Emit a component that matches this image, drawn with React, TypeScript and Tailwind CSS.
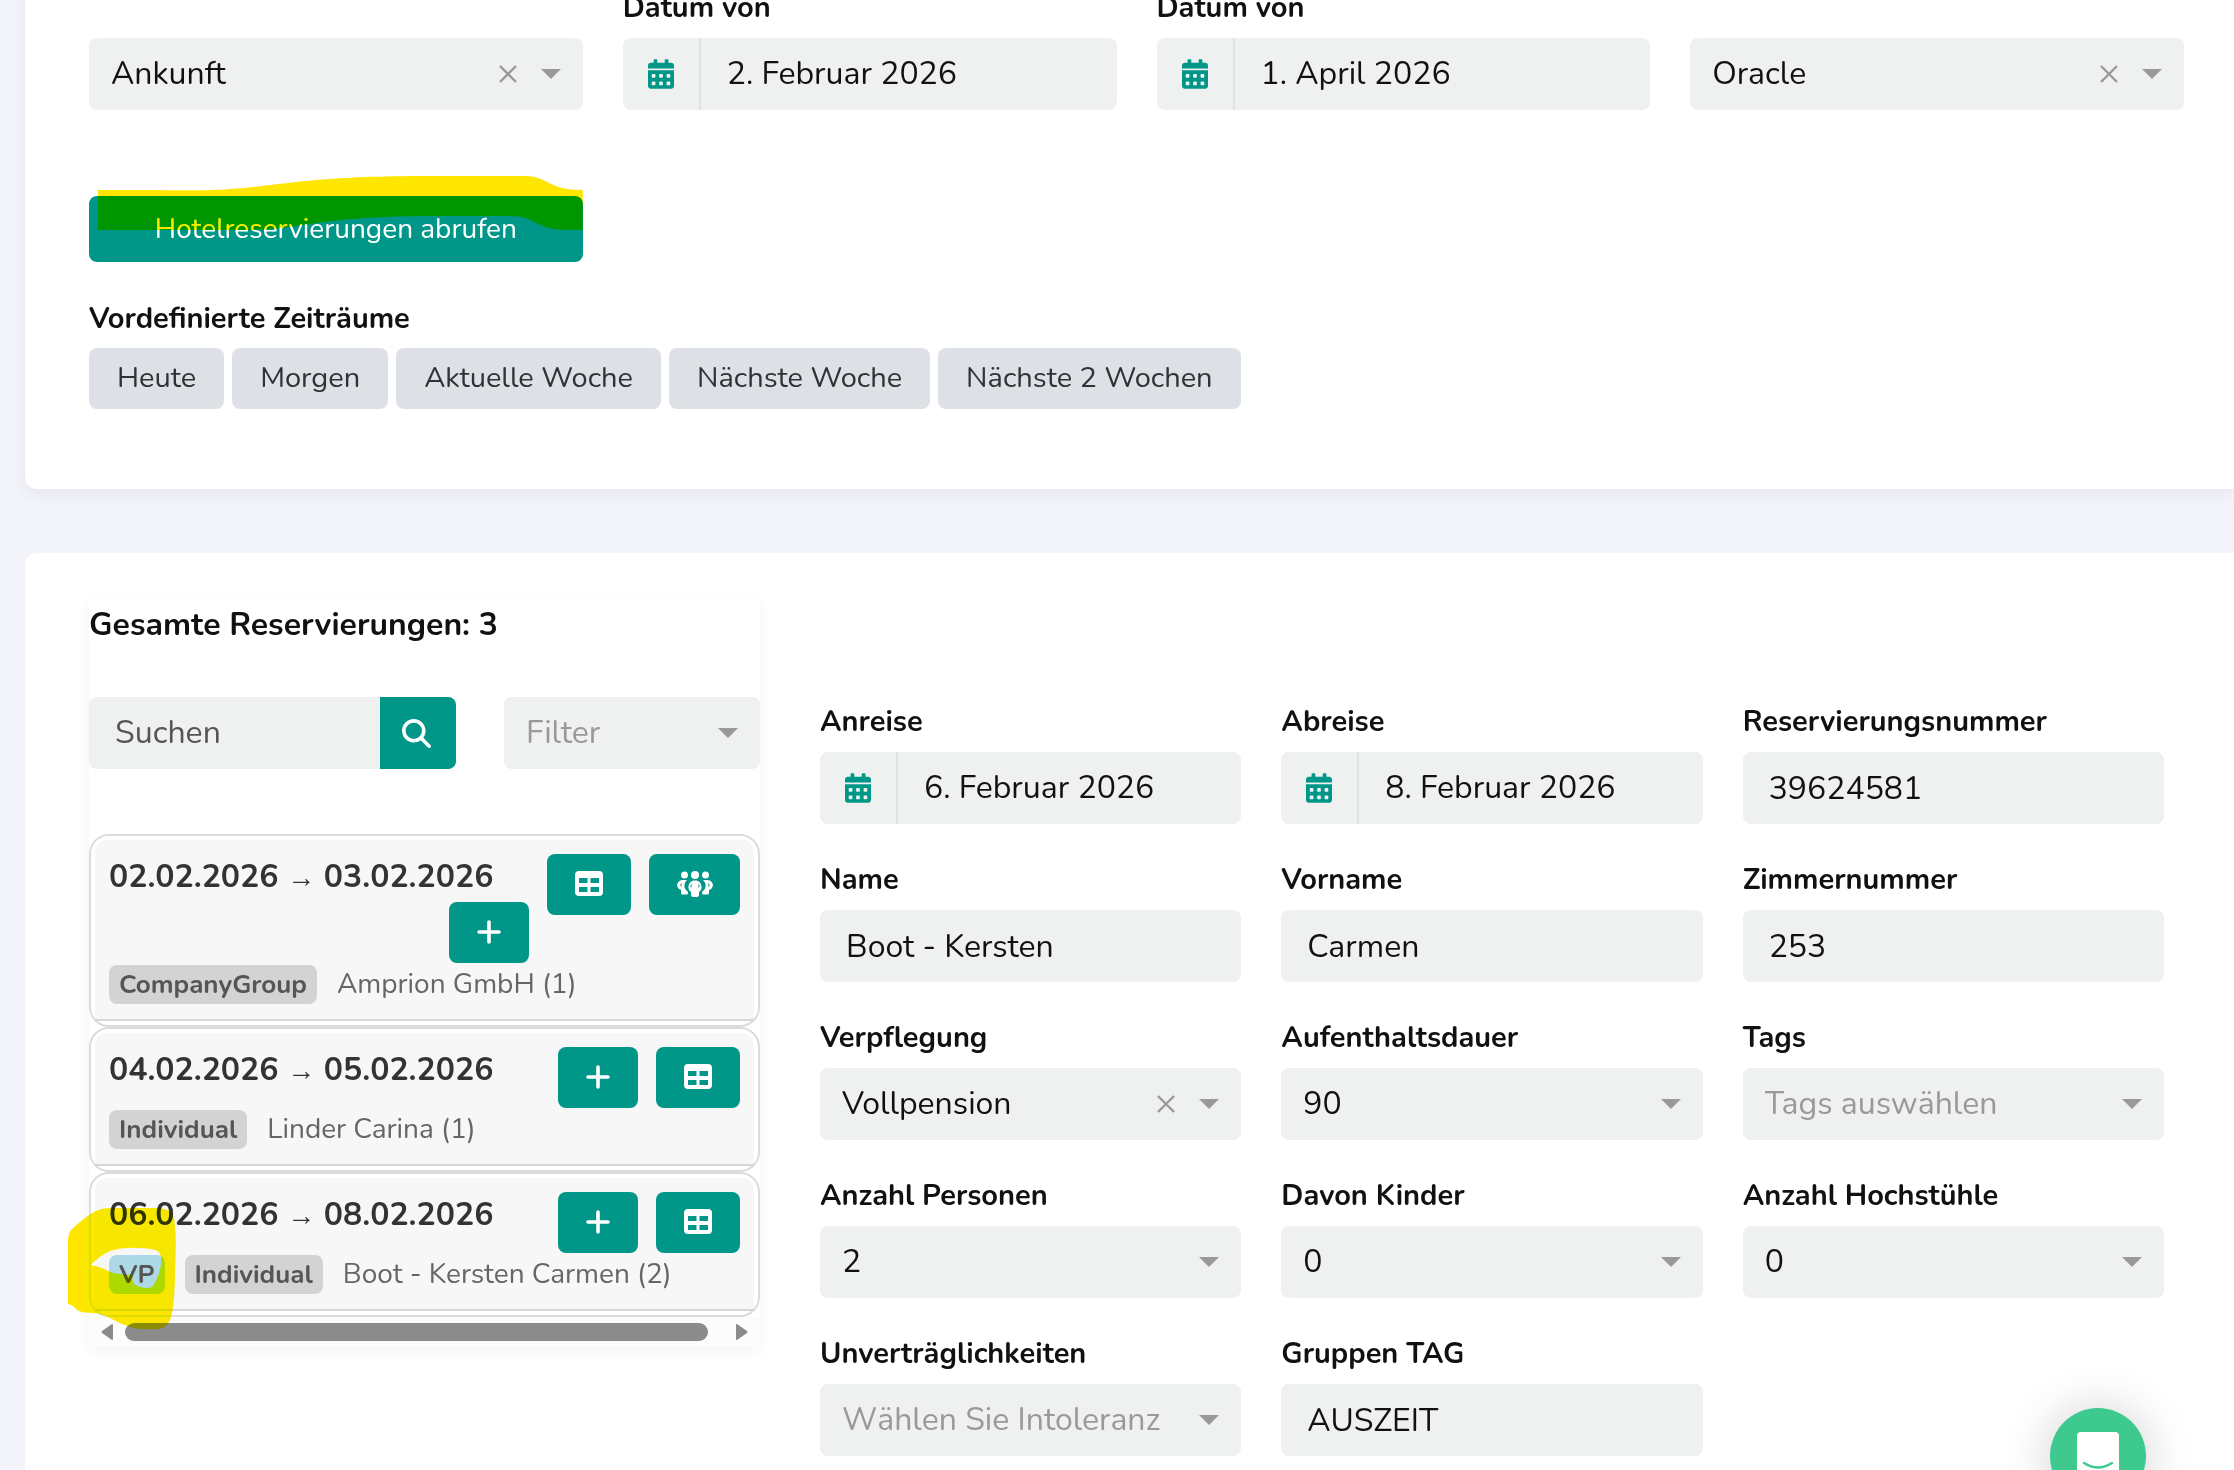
import React from "react";
import { FaCalendarAlt } from "react-icons/fa";
import { FaMagnifyingGlass } from "react-icons/fa6";

const ranges = ["Heute", "Morgen", "Aktuelle Woche", "Nächste Woche", "Nächste 2 Wochen"];

type Action = "plus" | "table" | "people";

const reservations: {
    from: string;
    to: string;
    lower?: Action;
    actions: Action[];
    board?: string;
    type: string;
    guest: string;
}[] = [
    {
        from: "02.02.2026",
        to: "03.02.2026",
        lower: "plus",
        actions: ["table", "people"],
        type: "CompanyGroup",
        guest: "Amprion GmbH (1)",
    },
    {
        from: "04.02.2026",
        to: "05.02.2026",
        actions: ["plus", "table"],
        type: "Individual",
        guest: "Linder Carina (1)",
    },
    {
        from: "06.02.2026",
        to: "08.02.2026",
        actions: ["plus", "table"],
        board: "VP",
        type: "Individual",
        guest: "Boot - Kersten Carmen (2)",
    },
];

const PlusIcon = () => (
    <svg viewBox="0 0 24 24" className="h-6 w-6" aria-hidden="true">
        <path d="M12 2v20M2 12h20" stroke="currentColor" strokeWidth="3.6" strokeLinecap="round" />
    </svg>
);

const TableIcon = () => (
    <svg viewBox="0 0 28 25" className="h-[25px] w-7" aria-hidden="true">
        <path
            fill="currentColor"
            fillRule="evenodd"
            d="M4 0h20a4 4 0 0 1 4 4v17a4 4 0 0 1-4 4H4a4 4 0 0 1-4-4V4a4 4 0 0 1 4-4ZM4 7v5h8.500V7Zm11.500 0v5H24V7ZM4 16v5h8.500v-5Zm11.500 0v5H24v-5Z"
        />
    </svg>
);

const PeopleIcon = () => (
    <svg viewBox="0 0 36 26" className="h-[26px] w-9" aria-hidden="true">
        <g fill="currentColor">
            <circle cx="7.5" cy="4" r="3.5" />
            <circle cx="28.5" cy="4" r="3.5" />
            <path d="M7 9h3a7 7 0 0 0-1 10l2 2v1a1.5 1.5 0 0 1-1.5 1.5h-4A1.5 1.5 0 0 1 4 22v-3a6 6 0 0 1-4-5 6 6 0 0 1 7-5Z" />
            <path d="M29 9h-3a7 7 0 0 1 1 10l-2 2v1a1.5 1.5 0 0 0 1.5 1.5h4A1.5 1.5 0 0 0 32 22v-3a6 6 0 0 0 4-5 6 6 0 0 0-7-5Z" />
            <circle cx="18" cy="4" r="4" />
            <path d="M16.5 9.5h3a6.5 6.5 0 0 1 2.5 11.5v3a2 2 0 0 1-2 2h-4a2 2 0 0 1-2-2v-3a6.5 6.5 0 0 1 2.5-11.500Z" />
        </g>
        <path
            d="M4.5 12.5q-1.5 1.5 0 3M31.5 12.5q1.5 1.5 0 3M14.5 13.5q-1.5 1.5 0 3M21.5 13.5q1.5 1.5 0 3"
            fill="none"
            stroke="#009688"
            strokeWidth="1"
        />
    </svg>
);

const Caret = () => (
    <svg
        viewBox="0 0 20 10"
        className="pointer-events-none absolute top-1/2 right-[22px] h-2.5 w-5 -translate-y-1/2 text-[#999]"
        aria-hidden="true"
    >
        <path d="M0 0h20L10 10Z" fill="currentColor" />
    </svg>
);

const Label = ({ htmlFor, children }: { htmlFor: string; children: React.ReactNode }) => (
    <label htmlFor={htmlFor} className="block text-[29px] leading-[43px] font-bold text-[#111]">
        {children}
    </label>
);

const TextField = ({ id, label, value }: { id: string; label: string; value: string }) => (
    <div className="flex min-w-0 flex-col gap-[9px]">
        <Label htmlFor={id}>{label}</Label>
        <input
            id={id}
            type="text"
            defaultValue={value}
            className="h-[72px] w-full rounded-lg bg-[#eff1f1] px-[26px] text-[32px]"
        />
    </div>
);

const DateField = ({ id, label, value }: { id: string; label: string; value: string }) => (
    <div className="flex min-w-0 flex-col gap-[9px]">
        <Label htmlFor={id}>{label}</Label>
        <div className="flex h-[72px] overflow-hidden rounded-lg bg-[#eff1f1]">
            <span className="flex w-[78px] shrink-0 items-center justify-center border-r-2 border-[#dde0ea]">
                <FaCalendarAlt className="h-[30px] w-[26px] text-[#009688]" />
            </span>
            <input id={id} type="text" defaultValue={value} className="w-full min-w-0 px-[26px] text-[32px]" />
        </div>
    </div>
);

const SelectField = ({
    id,
    label,
    value,
    clearable,
    placeholder,
}: {
    id: string;
    label?: string;
    value: string;
    clearable?: boolean;
    placeholder?: boolean;
}) => (
    <div className="flex min-w-0 flex-col justify-end gap-[9px]">
        {label && <Label htmlFor={id}>{label}</Label>}
        <div className="relative">
            <select
                id={id}
                aria-label={label ? undefined : value}
                className={`h-[72px] w-full appearance-none rounded-lg bg-[#eff1f1] pr-16 pl-[22px] text-[32px] ${
                    placeholder ? "text-[#999]" : "text-[#111]"
                }`}
            >
                <option>{value}</option>
            </select>
            {clearable && (
                <button
                    type="button"
                    aria-label="Auswahl löschen"
                    className="absolute top-1/2 right-[66px] -translate-y-1/2 text-[#999]"
                >
                    <svg viewBox="0 0 18 18" className="h-[18px] w-[18px]" aria-hidden="true">
                        <path d="M1 1l16 16M17 1L1 17" stroke="currentColor" strokeWidth="2.4" />
                    </svg>
                </button>
            )}
            <Caret />
        </div>
    </div>
);

const ActionButton = ({ action }: { action: Action }) => {
    if (action === "plus") {
        return (
            <button
                type="button"
                aria-label="Hinzufügen"
                className="flex h-[61px] w-20 items-center justify-center rounded-lg bg-[#009688] pb-0.5 text-white"
            >
                <PlusIcon />
            </button>
        );
    }
    if (action === "people") {
        return (
            <button
                type="button"
                aria-label="Gruppe"
                className="flex h-[61px] w-[91px] items-center justify-center rounded-lg bg-[#009688] pb-0.5 text-white"
            >
                <PeopleIcon />
            </button>
        );
    }
    return (
        <button
            type="button"
            aria-label="Tisch"
            className="flex h-[61px] w-[84px] items-center justify-center rounded-lg bg-[#009688] pb-0.5 text-white"
        >
            <TableIcon />
        </button>
    );
};

const FilterCard = () => (
    <section className="-mt-16 rounded-l-xl bg-white pt-[50px] pr-[50px] pb-20 pl-16 shadow-[0_4px_16px_rgba(60,60,110,0.07)]">
        <div className="grid grid-cols-4 gap-10">
            <SelectField id="art" value="Ankunft" clearable />
            <DateField id="von" label="Datum von" value="2. Februar 2026" />
            <DateField id="bis" label="Datum von" value="1. April 2026" />
            <SelectField id="system" value="Oracle" clearable />
        </div>

        <div className="mt-[86px] grid grid-cols-4 gap-10">
            <div className="relative">
                <button type="button" className="h-[66px] w-full rounded-lg bg-[#009688] text-[28px] text-white">
                    Hotelreservierungen abrufen
                </button>
                {/* marker stroke over the fetch button */}
                <svg
                    viewBox="0 0 485 54"
                    preserveAspectRatio="none"
                    className="pointer-events-none absolute -top-5 right-0 left-[9px] h-[54px] w-[calc(100%-9px)] mix-blend-darken"
                    aria-hidden="true"
                >
                    <path
                        d="M0 14H60C180 17 170 0 330 0H426C452 0 448 14 485 14V54H470C436 54 440 40 412 40H340C220 40 200 54 150 54H0Z"
                        fill="#ffe600"
                    />
                </svg>
            </div>
        </div>

        <h2 className="mt-[35px] text-[29px] leading-[43px] font-bold">Vordefinierte Zeiträume</h2>
        <div className="mt-2 flex flex-wrap gap-2">
            {ranges.map((range) => (
                <button
                    key={range}
                    type="button"
                    className="h-[61px] rounded-lg bg-[#dde1e6] px-7 pb-0.5 text-[29px] text-[#2f3337]"
                >
                    {range}
                </button>
            ))}
        </div>
    </section>
);

const ReservationCard = ({ item }: { item: (typeof reservations)[number] }) => (
    <li className="rounded-[20px] border-2 border-[#dcdcdc] bg-white p-1">
        <div className="rounded-t-xl border-b-2 border-[#d6d6d6] bg-[#f7f7f7] px-3.5 pt-3.5 pb-[15px]">
            <div className="flex items-start gap-[18px]">
                <div className="flex min-w-0 flex-1 flex-col">
                    <p className="h-12 text-[32px] leading-[46px] font-bold whitespace-nowrap text-[#333]">
                        {item.from} <span className="font-['Roboto'] text-[28px] font-normal">→</span> {item.to}
                    </p>
                    {item.lower && (
                        <div className="self-end">
                            <ActionButton action={item.lower} />
                        </div>
                    )}
                </div>
                {item.actions.map((action) => (
                    <ActionButton key={action} action={action} />
                ))}
            </div>
            <div className="mt-0.5 flex items-center gap-5">
                {item.board && (
                    <span className="rounded-lg bg-[#add8e6] px-2.5 text-[26px] leading-[39px] font-bold text-[#555]">
                        {item.board}
                    </span>
                )}
                <span className="rounded-lg bg-[#d3d3d3] px-2.5 text-[26px] leading-[39px] font-bold text-[#555]">
                    {item.type}
                </span>
                <span className="text-[28px] leading-[39px] text-[#666]">{item.guest}</span>
            </div>
        </div>
    </li>
);

const ReservationList = () => (
    <div className="relative w-[671px] shrink-0 self-start shadow-[0_4px_12px_rgba(60,60,110,0.06)]">
        <h2 className="pt-1 text-[32px] leading-[43px] font-bold">Gesamte Reservierungen: 3</h2>

        <div className="mt-[51px] flex gap-12">
            <div className="flex h-[72px] flex-1 overflow-hidden rounded-lg bg-[#eff1f1]">
                <input
                    type="search"
                    aria-label="Suchen"
                    placeholder="Suchen"
                    className="w-full min-w-0 px-[26px] text-[32px] placeholder:text-[#555]"
                />
                <button
                    type="button"
                    aria-label="Suche starten"
                    className="flex w-[76px] shrink-0 items-center justify-center bg-[#009688] pr-1 text-white"
                >
                    <FaMagnifyingGlass className="h-[29px] w-[29px]" />
                </button>
            </div>
            <div className="w-64">
                <SelectField id="filter" value="Filter" placeholder />
            </div>
        </div>

        <ul className="mt-[65px]">
            {reservations.map((item) => (
                <ReservationCard key={item.from} item={item} />
            ))}
        </ul>

        <div className="flex h-[30px] items-center bg-[#fcfcfc] px-3">
            <svg viewBox="0 0 12 16" className="h-4 w-3 text-[#8b8b8b]" aria-hidden="true">
                <path d="M11 0q1 0 1 1v14q0 1-1 1L1 9Q0 8 1 7Z" fill="currentColor" />
            </svg>
            <div className="mr-7 ml-3 h-[18px] flex-1 rounded-full bg-[#8b8b8b]" />
            <svg viewBox="0 0 12 16" className="h-4 w-3 text-[#8b8b8b]" aria-hidden="true">
                <path d="M1 0Q0 0 0 1v14q0 1 1 1l10-7q1-1 0-2Z" fill="currentColor" />
            </svg>
        </div>

        {/* marker stroke around the board badge */}
        <svg
            viewBox="0 0 110 122"
            className="pointer-events-none absolute bottom-[17px] -left-[21px] h-[122px] w-[110px] mix-blend-darken"
            aria-hidden="true"
        >
            <path
                fill="#ffe600"
                fillRule="evenodd"
                d="M0 31Q0 26 3 22Q14 11 26 4Q33 0 42 0H88Q104 0 106 10Q109 30 107 62Q107 90 104 105Q101 121 89 121Q72 122 62 119Q52 116 42 110Q32 105 25 105Q13 105 9 102Q5 97 0 96ZM23 57Q31 48 42 43Q55 39 69 40Q86 40 91 44Q94 48 93 56Q91 70 84 79Q76 82 66 76Q63 70 65 67Q52 67 42 64Q34 59 23 57Z"
            />
        </svg>
    </div>
);

const DetailForm = () => (
    <div className="mt-[101px] grid flex-1 grid-cols-3 content-start gap-x-10 gap-y-[34px]">
        <DateField id="anreise" label="Anreise" value="6. Februar 2026" />
        <DateField id="abreise" label="Abreise" value="8. Februar 2026" />
        <TextField id="nummer" label="Reservierungsnummer" value="39624581" />
        <TextField id="name" label="Name" value="Boot - Kersten" />
        <TextField id="vorname" label="Vorname" value="Carmen" />
        <TextField id="zimmer" label="Zimmernummer" value="253" />
        <SelectField id="verpflegung" label="Verpflegung" value="Vollpension" clearable />
        <SelectField id="dauer" label="Aufenthaltsdauer" value="90" />
        <SelectField id="tags" label="Tags" value="Tags auswählen" placeholder />
        <SelectField id="personen" label="Anzahl Personen" value="2" />
        <SelectField id="kinder" label="Davon Kinder" value="0" />
        <SelectField id="hochstuehle" label="Anzahl Hochstühle" value="0" />
        <SelectField id="intoleranz" label="Unverträglichkeiten" value="Wählen Sie Intoleranz" placeholder />
        <TextField id="gruppe" label="Gruppen TAG" value="AUSZEIT" />
    </div>
);

const App = () => {
    return (
        <main className="flex h-screen flex-col gap-16 overflow-hidden bg-[#f3f4f9] pl-[25px] font-['Nunito','Lato',sans-serif] text-[#111]">
            <FilterCard />
            <section className="flex flex-1 gap-[60px] rounded-tl-xl bg-white pt-[46px] pr-[70px] pl-16">
                <ReservationList />
                <DetailForm />
            </section>
            <button
                type="button"
                aria-label="Chat öffnen"
                className="fixed right-[88px] -bottom-[34px] flex h-24 w-24 justify-center rounded-full bg-[#3ec98f] pt-6 shadow-[0_2px_50px_rgba(0,0,0,0.2)]"
            >
                <svg viewBox="0 0 42 48" className="h-12 w-[42px]" aria-hidden="true">
                    <path d="M4 0h34a4 4 0 0 1 4 4v44l-8-4H4a4 4 0 0 1-4-4V4a4 4 0 0 1 4-4Z" fill="#fff" />
                    <path d="M7 31q14 9 28 0" fill="none" stroke="#3ec98f" strokeWidth="2.5" strokeLinecap="round" />
                </svg>
            </button>
        </main>
    );
};

export default App;
